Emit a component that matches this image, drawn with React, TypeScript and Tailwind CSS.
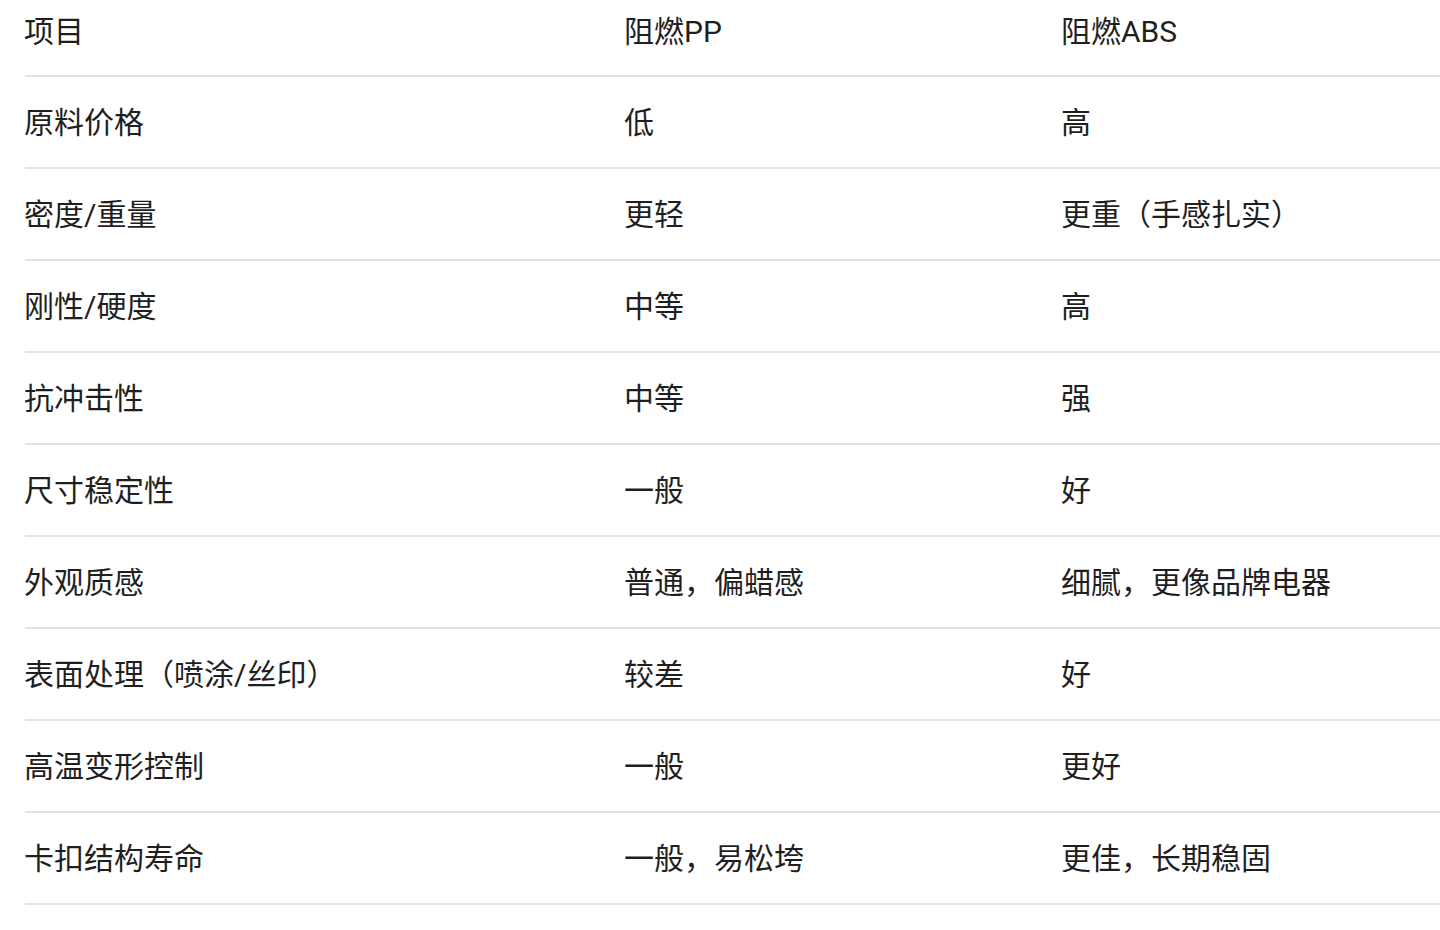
import React from "react";

const rows: [string, string, string][] = [
  ["原料价格", "低", "高"],
  ["密度/重量", "更轻", "更重（手感扎实）"],
  ["刚性/硬度", "中等", "高"],
  ["抗冲击性", "中等", "强"],
  ["尺寸稳定性", "一般", "好"],
  ["外观质感", "普通，偏蜡感", "细腻，更像品牌电器"],
  ["表面处理（喷涂/丝印）", "较差", "好"],
  ["高温变形控制", "一般", "更好"],
  ["卡扣结构寿命", "一般，易松垮", "更佳，长期稳固"],
];

export default function App() {
  return (
    <div
      className="w-[1440px] h-[930px] overflow-hidden bg-white text-[#1f1f1f]"
      style={{ fontFamily: 'Roboto, "Noto Sans CJK SC", sans-serif' }}
    >
      <div className="ml-[25px] w-[1500px]">
        <div className="flex h-[77px] items-center pb-[12px] border-b-2 border-[#e3e3e3] text-[30px] leading-[45px]">
          <div className="w-[600px] -ml-px">项目</div>
          <div className="w-[437px]">阻燃PP</div>
          <div className="flex-1">阻燃ABS</div>
        </div>
        {rows.map((r, i) => (
          <div
            key={i}
            className="flex h-[92px] items-center border-b-2 border-[#e3e3e3] text-[30px] leading-[45px]"
          >
            <div className="w-[600px] -ml-px">{r[0]}</div>
            <div className="w-[437px]">{r[1]}</div>
            <div className="flex-1">{r[2]}</div>
          </div>
        ))}
      </div>
    </div>
  );
}
